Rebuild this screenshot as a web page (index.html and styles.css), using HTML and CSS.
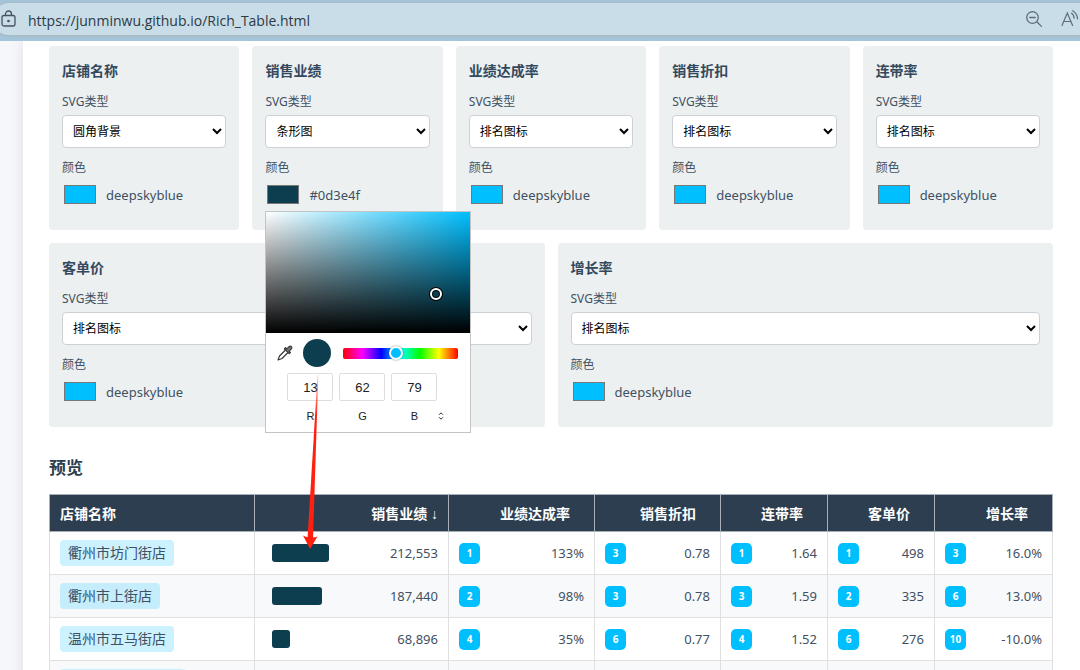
FILE: index.html
```
<!DOCTYPE html>
<html lang="zh-CN">
<head>
    <meta charset="UTF-8">
    <meta name="viewport" content="width=device-width, initial-scale=1.0">
    <title>Rich Table</title>
    <link rel="stylesheet" href="styles.css">
</head>
<body>
    <header class="browser-bar">
        <div class="address">
            <svg class="lock" width="16" height="18" viewBox="0 0 16 18" fill="none" stroke="#46545d" stroke-width="1.3">
                <rect x="1" y="5.500" width="13" height="10.500" rx="2"/>
                <path d="M4.500 5.500V4a3 3 0 0 1 6 0v1.500"/>
                <circle cx="7.500" cy="11" r="0.700" fill="#46545d"/>
            </svg>
            <input class="url" type="text" aria-label="地址" value="https://junminwu.github.io/Rich_Table.html">
            <button class="bar-btn" aria-label="缩小">
                <svg width="18" height="18" viewBox="0 0 18 18" fill="none" stroke="#5d6d77" stroke-width="1.3" stroke-linecap="round">
                    <circle cx="7.500" cy="7.500" r="5.800"/>
                    <path d="M4.800 7.500h5.400M11.800 11.800l4.600 4.600"/>
                </svg>
            </button>
            <button class="bar-btn" aria-label="大声朗读">
                <svg width="18" height="18" viewBox="0 0 18 18" fill="none" stroke="#5d6d77" stroke-width="1.2" stroke-linecap="round">
                    <path d="M1 15.500L6.300 3l5.300 12.500M2.800 11.500h7"/>
                    <path d="M10.500 3.200q2.500 1.500 2.600 5M11.500 0.800q4.600 2.400 5 8"/>
                </svg>
            </button>
        </div>
    </header>

    <main class="page">
        <div class="container">
            <div class="config">
                <section class="card">
                    <h3>店铺名称</h3>
                    <label for="type1">SVG类型</label>
                    <select id="type1"><option>圆角背景</option></select>
                    <label for="color1">颜色</label>
                    <div class="color-row">
                        <input type="color" id="color1" value="#00bfff">
                        <span>deepskyblue</span>
                    </div>
                </section>
                <section class="card">
                    <h3>销售业绩</h3>
                    <label for="type2">SVG类型</label>
                    <select id="type2"><option>条形图</option></select>
                    <label for="color2">颜色</label>
                    <div class="color-row">
                        <input type="color" id="color2" value="#0d3e4f">
                        <span>#0d3e4f</span>
                        <div class="picker">
                            <div class="shade"><i class="shade-dot"></i></div>
                            <div class="picker-row">
                                <button class="dropper" aria-label="取色">
                                    <svg width="16" height="16" viewBox="0 0 16 16" fill="none" stroke="#333" stroke-width="1.1" stroke-linejoin="round" stroke-linecap="round">
                                        <path d="M8.500 5L2.500 11 1 15l4-1.500L11 7.500"/>
                                        <path fill="#777" d="M7.300 3.800l4.900 4.900 1.200-1.200-1.300-1.300 2.300-2.300a1.600 1.600 0 0 0-2.300-2.300L9.800 3.900 8.500 2.600z"/>
                                    </svg>
                                </button>
                                <span class="current"></span>
                                <input class="hue" type="range" min="0" max="100" value="45" aria-label="色相">
                            </div>
                            <div class="channels">
                                <label><input type="text" value="13">R</label>
                                <label><input type="text" value="62">G</label>
                                <label><input type="text" value="79">B</label>
                                <button class="switch" aria-label="切换格式">
                                    <svg width="6" height="8" viewBox="0 0 6 8" fill="none" stroke="#333">
                                        <path d="M1 2.800L3 0.800l2 2M1 5.200l2 2 2-2"/>
                                    </svg>
                                </button>
                            </div>
                            <svg class="arrow" width="18" height="174" viewBox="0 0 18 174" fill="#ff2010">
                                <defs>
                                    <linearGradient id="fade" x1="0" y1="0" x2="0" y2="1">
                                        <stop offset="0" stop-color="#ff2010" stop-opacity="0.200"/>
                                        <stop offset="0.250" stop-color="#ff2010"/>
                                    </linearGradient>
                                </defs>
                                <path fill="url(#fade)" d="M15.500 0h0.800L11 164H5.500z"/>
                                <path d="M8 174L1 160.500q3 1.500 4.500 1.500L11 162.500q2 0 4.500-1z"/>
                            </svg>
                        </div>
                    </div>
                </section>
                <section class="card">
                    <h3>业绩达成率</h3>
                    <label for="type3">SVG类型</label>
                    <select id="type3"><option>排名图标</option></select>
                    <label for="color3">颜色</label>
                    <div class="color-row">
                        <input type="color" id="color3" value="#00bfff">
                        <span>deepskyblue</span>
                    </div>
                </section>
                <section class="card">
                    <h3>销售折扣</h3>
                    <label for="type4">SVG类型</label>
                    <select id="type4"><option>排名图标</option></select>
                    <label for="color4">颜色</label>
                    <div class="color-row">
                        <input type="color" id="color4" value="#00bfff">
                        <span>deepskyblue</span>
                    </div>
                </section>
                <section class="card">
                    <h3>连带率</h3>
                    <label for="type5">SVG类型</label>
                    <select id="type5"><option>排名图标</option></select>
                    <label for="color5">颜色</label>
                    <div class="color-row">
                        <input type="color" id="color5" value="#00bfff">
                        <span>deepskyblue</span>
                    </div>
                </section>
                <section class="card">
                    <h3>客单价</h3>
                    <label for="type6">SVG类型</label>
                    <select id="type6"><option>排名图标</option></select>
                    <label for="color6">颜色</label>
                    <div class="color-row">
                        <input type="color" id="color6" value="#00bfff">
                        <span>deepskyblue</span>
                    </div>
                </section>
                <section class="card">
                    <h3>增长率</h3>
                    <label for="type7">SVG类型</label>
                    <select id="type7"><option>排名图标</option></select>
                    <label for="color7">颜色</label>
                    <div class="color-row">
                        <input type="color" id="color7" value="#00bfff">
                        <span>deepskyblue</span>
                    </div>
                </section>
            </div>

            <h2>预览</h2>
            <table>
                <colgroup>
                    <col class="c-name"><col class="c-sales"><col class="c-rate"><col class="c-discount">
                    <col class="c-unit"><col class="c-unit"><col class="c-growth">
                </colgroup>
                <thead>
                    <tr>
                        <th>店铺名称</th>
                        <th>销售业绩 <span class="sort">↓</span></th>
                        <th>业绩达成率</th>
                        <th>销售折扣</th>
                        <th>连带率</th>
                        <th>客单价</th>
                        <th>增长率</th>
                    </tr>
                </thead>
                <tbody>
                    <tr>
                        <td><span class="tag">衢州市坊门街店</span></td>
                        <td><div class="cell"><i class="bar" style="width: 57px"></i>212,553</div></td>
                        <td><div class="cell"><b class="rank">1</b>133%</div></td>
                        <td><div class="cell"><b class="rank">3</b>0.78</div></td>
                        <td><div class="cell"><b class="rank">1</b>1.64</div></td>
                        <td><div class="cell"><b class="rank">1</b>498</div></td>
                        <td><div class="cell"><b class="rank">3</b>16.0%</div></td>
                    </tr>
                    <tr>
                        <td><span class="tag">衢州市上街店</span></td>
                        <td><div class="cell"><i class="bar" style="width: 50px"></i>187,440</div></td>
                        <td><div class="cell"><b class="rank">2</b>98%</div></td>
                        <td><div class="cell"><b class="rank">3</b>0.78</div></td>
                        <td><div class="cell"><b class="rank">3</b>1.59</div></td>
                        <td><div class="cell"><b class="rank">2</b>335</div></td>
                        <td><div class="cell"><b class="rank">6</b>13.0%</div></td>
                    </tr>
                    <tr>
                        <td><span class="tag">温州市五马街店</span></td>
                        <td><div class="cell"><i class="bar" style="width: 18px"></i>68,896</div></td>
                        <td><div class="cell"><b class="rank">4</b>35%</div></td>
                        <td><div class="cell"><b class="rank">6</b>0.77</div></td>
                        <td><div class="cell"><b class="rank">4</b>1.52</div></td>
                        <td><div class="cell"><b class="rank">6</b>276</div></td>
                        <td><div class="cell"><b class="rank">10</b>-10.0%</div></td>
                    </tr>
                    <tr>
                        <td><span class="tag tag-wide"></span></td>
                        <td></td><td></td><td></td><td></td><td></td><td></td>
                    </tr>
                </tbody>
            </table>
        </div>
    </main>
</body>
</html>
```
FILE: styles.css
```
* {
    box-sizing: border-box;
}
body {
    margin: 0;
    height: 100vh;
    display: flex;
    flex-direction: column;
    overflow: hidden;
    font-family: "Noto Sans", "Noto Sans CJK SC", sans-serif;
    font-size: 14px;
    color: #3f5163;
    background: #f5f7fb;
}
button {
    border: none;
    background: none;
    padding: 0;
    display: flex;
    cursor: pointer;
}

/* browser bar */
.browser-bar {
    flex: none;
    height: 41px;
    padding: 2px 0 5px;
    background: #a3c4d9;
    overflow: hidden;
}
.address {
    height: 35px;
    margin: 0 -20px 0 -8px;
    padding: 0 20px 0 8px;
    display: flex;
    align-items: center;
    background: #c9dde8;
    border: 1px solid #a9bdc9;
    border-bottom-width: 2px;
    border-radius: 17px;
}
.lock {
    flex: none;
}
.url {
    flex: 1;
    min-width: 0;
    margin-left: 11px;
    padding: 2px 0 0;
    border: none;
    outline: none;
    background: none;
    font-family: "Open Sans", sans-serif;
    font-size: 14px;
    color: #2b3a44;
}
.bar-btn {
    margin-left: 18px;
}

/* page */
.page {
    flex: 1;
    min-height: 0;
    overflow: hidden;
    padding-left: 23px;
}
.container {
    min-height: 100%;
    padding: 5px 27px 26px 26px;
    background: #fff;
    box-shadow: 0 0 13px rgba(0, 0, 0, 0.1);
}
.config {
    display: flex;
    flex-wrap: wrap;
    gap: 13px;
}
.card {
    flex: 1 1 180px;
    height: 184px;
    padding: 13px;
    border-radius: 4px;
    background: #ecf0f1;
}
.card h3 {
    margin: 0 0 11px;
    font-size: 14px;
    line-height: 24px;
    color: #34495e;
}
.card label {
    display: block;
    font-size: 12px;
    line-height: 16px;
    margin-bottom: 5px;
}
.card select {
    display: block;
    width: 100%;
    height: 33px;
    margin-bottom: 12px;
    padding: 6px;
    border: 1px solid #ccd1d6;
    border-radius: 4px;
    background-color: #fff;
    color: #000;
    font-family: inherit;
    font-size: 12px;
}
.color-row {
    position: relative;
    display: flex;
    align-items: center;
    gap: 10px;
    height: 27px;
    padding-left: 2px;
}
input[type="color"] {
    appearance: none;
    width: 32px;
    height: 19px;
    padding: 0;
    border: 1px solid #777;
    background: none;
}
input[type="color"]::-webkit-color-swatch-wrapper {
    padding: 0;
}
input[type="color"]::-webkit-color-swatch {
    border: none;
}
.color-row span {
    font-size: 13px;
}

/* color popup */
.picker {
    position: absolute;
    z-index: 2;
    top: 30px;
    left: 0;
    width: 206px;
    height: 222px;
    border: 1px solid #c4c4c4;
    background: #fff;
    font-family: "Liberation Sans", Arial, sans-serif;
    color: #222;
}
.shade {
    position: relative;
    height: 121px;
    background: linear-gradient(to top, #000, transparent), linear-gradient(to right, #fff, #00bfff);
}
.shade-dot {
    position: absolute;
    left: 83%;
    top: 68%;
    width: 12px;
    height: 12px;
    margin: -6px;
    border: 2px solid #fff;
    border-radius: 50%;
    background: #0d3e4f;
    box-shadow: 0 0 0 1px #000, inset 0 0 0 1px #000;
}
.picker-row {
    display: flex;
    align-items: center;
    height: 40px;
    padding: 0 12px 0 11px;
}
.current {
    flex: none;
    width: 28px;
    height: 28px;
    margin: 0 12px 0 10px;
    border-radius: 50%;
    background: #0d3e4f;
}
.hue {
    appearance: none;
    flex: 1;
    min-width: 0;
    height: 11px;
    margin: 0;
    border-radius: 2px;
    background: linear-gradient(to right, #f00, #f0f, #00f, #0ff, #0f0, #ff0, #f00);
}
.hue::-webkit-slider-thumb {
    appearance: none;
    width: 14px;
    height: 14px;
    border: 2px solid #fff;
    border-radius: 50%;
    background: #00bfff;
    box-shadow: 0 0 2px rgba(0, 0, 0, 0.5);
}
.channels {
    display: flex;
    gap: 6px;
    padding-left: 21px;
}
.channels label {
    margin: 0;
    font-size: 11px;
    text-align: center;
}
.channels input {
    display: block;
    width: 46px;
    height: 28px;
    margin-bottom: 7px;
    padding: 0;
    border: 1px solid #ddd;
    border-radius: 2px;
    font-family: inherit;
    font-size: 13px;
    color: #222;
    text-align: center;
}
.switch {
    align-self: flex-end;
    padding-bottom: 4px;
    margin-left: -5px;
}
.arrow {
    position: absolute;
    left: 36px;
    top: 163px;
}

/* preview */
h2 {
    margin: 28px 0 13px;
    font-size: 17px;
    line-height: 26px;
    color: #2c3e50;
}
table {
    width: 100%;
    table-layout: fixed;
    border-collapse: collapse;
}
.c-name { width: 205px; }
.c-sales { width: 194px; }
.c-rate { width: 146px; }
.c-discount { width: 126px; }
.c-unit { width: 107px; }
.c-growth { width: 118px; }
th, td {
    padding: 0 10px;
    border: 1px solid #e0e0e0;
}
th {
    height: 37px;
    background: #2c3e50;
    border-color: #a7b0b8;
    color: #fff;
    text-align: right;
}
th:first-child {
    text-align: left;
}
th:not(:first-child):not(:nth-child(2)) {
    padding-right: 24px;
}
.sort {
    font-family: "Liberation Sans", Arial, sans-serif;
}
td {
    height: 43px;
}
tbody tr:nth-child(even) {
    background: #f8f9fa;
}
.tag {
    display: block;
    width: fit-content;
    height: 26px;
    padding: 0 8px;
    border-radius: 4px;
    line-height: 26px;
    background: rgba(0, 191, 255, 0.2);
}
.tag-wide {
    width: 126px;
}
.cell {
    display: flex;
    align-items: center;
    justify-content: space-between;
    font-size: 13px;
}
.bar {
    height: 18px;
    margin-left: 7px;
    border-radius: 3px;
    background: #0d3e4f;
}
.rank {
    width: 21px;
    height: 21px;
    border-radius: 5px;
    background: #00bfff;
    color: #fff;
    font-size: 10px;
    line-height: 21px;
    text-align: center;
}
```
